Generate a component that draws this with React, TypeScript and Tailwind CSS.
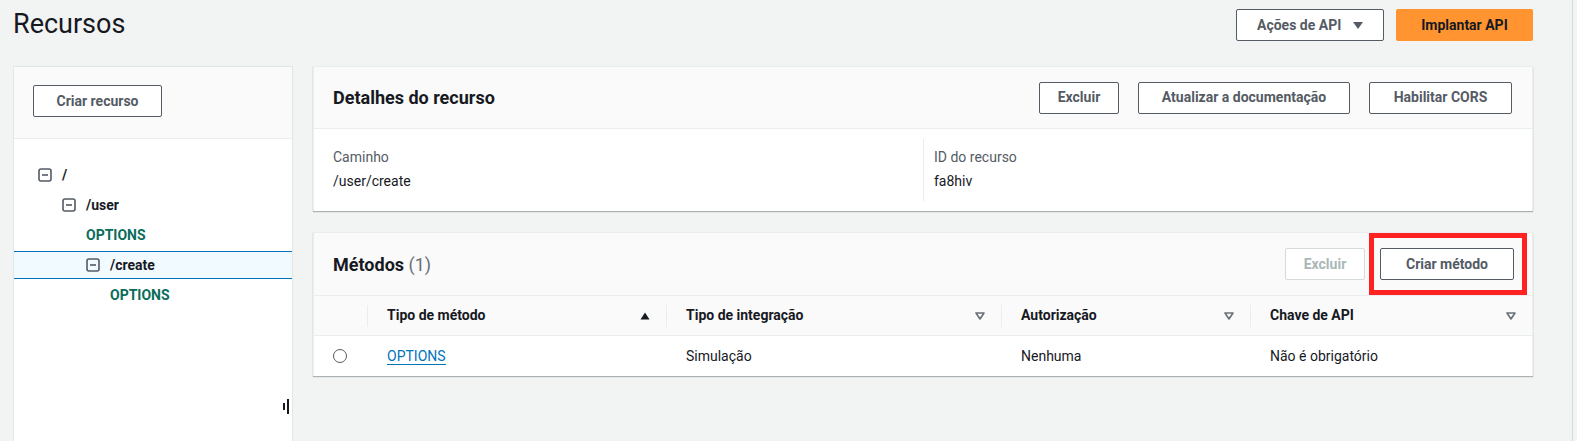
import React from "react";

function TreeToggle() {
  return (
    <svg width="14" height="14" viewBox="0 0 14 14" className="shrink-0">
      <rect x="1" y="1" width="12" height="12" rx="2" fill="none" stroke="#545b64" strokeWidth="1.6" />
      <line x1="4" y1="7" x2="10" y2="7" stroke="#545b64" strokeWidth="1.6" />
    </svg>
  );
}

function SortIcon({ active }: { active?: boolean }) {
  if (active) {
    return (
      <svg width="10" height="8" viewBox="0 0 10 8" className="shrink-0">
        <polygon points="5,0.5 9.5,7.5 0.5,7.5" fill="#16191f" />
      </svg>
    );
  }
  return (
    <svg width="10" height="8" viewBox="0 0 10 8" className="shrink-0">
      <polygon points="1,1 9,1 5,7" fill="none" stroke="#687078" strokeWidth="1.6" strokeLinejoin="round" />
    </svg>
  );
}

function Btn({ children, disabled, w }: { children: React.ReactNode; disabled?: boolean; w: string }) {
  return (
    <button
      className={
        (disabled
          ? "h-[32px] rounded-[2px] border border-[#d5dbdb] bg-white text-[14px] font-bold text-[#aab7b8] "
          : "h-[32px] rounded-[2px] border border-[#545b64] bg-white text-[14px] font-bold text-[#545b64] ") + w
      }
    >
      {children}
    </button>
  );
}

const tree = [
  { label: "/", level: 0, toggle: true },
  { label: "/user", level: 1, toggle: true },
  { label: "OPTIONS", level: 2, method: true },
  { label: "/create", level: 2, toggle: true, selected: true },
  { label: "OPTIONS", level: 3, method: true },
];

export default function App() {
  return (
    <div
      className="flex h-[441px] w-full overflow-hidden bg-[#f2f3f3] text-[#16191f]"
      style={{ fontFamily: "Roboto, 'Liberation Sans', sans-serif" }}
    >
      <div className="flex w-[1572px] shrink-0 flex-col pl-[13px] pr-[39px]">
        {/* Page header */}
        <div className="flex h-[66px] shrink-0 items-start justify-between">
          <h1 className="mt-[8px] text-[27px] font-normal leading-[32px] text-[#16191f]">Recursos</h1>
          <div className="mt-[9px] flex gap-[12px]">
            <button className="flex h-[32px] w-[148px] items-center gap-[12px] rounded-[2px] border border-[#545b64] bg-white pl-[20px] text-[14px] font-bold text-[#545b64]">
              Ações de API
              <svg width="10" height="7" viewBox="0 0 10 7">
                <polygon points="0,0 10,0 5,7" fill="#545b64" />
              </svg>
            </button>
            <button className="h-[32px] w-[137px] rounded-[2px] bg-[#ff9430] text-[14px] font-bold text-[#16191f]">
              Implantar API
            </button>
          </div>
        </div>

        <div className="flex min-h-0 flex-1 gap-[20px]">
          {/* Resource tree */}
          <div className="relative flex w-[280px] shrink-0 flex-col border border-b-0 border-[#e3e6e6] bg-white">
            <div className="border-b border-[#eaeded] bg-[#fafafa] px-[19px] pb-[21px] pt-[18px]">
              <button className="h-[32px] w-[129px] rounded-[2px] border border-[#545b64] bg-white text-[14px] font-bold text-[#545b64]">
                Criar recurso
              </button>
            </div>
            <div className="pt-[21px]">
              {tree.map((n, i) => (
                <div
                  key={i}
                  className={
                    n.selected
                      ? "my-[1px] flex h-[28px] items-center gap-[10px] border-y border-[#0073bb] bg-[#f1faff] text-[14px] font-bold"
                      : "flex h-[30px] items-center gap-[10px] text-[14px] font-bold"
                  }
                  style={{ paddingLeft: 24 + n.level * 24 }}
                >
                  {n.toggle && <TreeToggle />}
                  <span className={n.method ? "text-[#0a6c5a]" : "text-[#16191f]"}>{n.label}</span>
                </div>
              ))}
            </div>
            <div className="absolute left-[269px] top-[332px] flex items-center gap-[2px]">
              <div className="h-[7px] w-[2px] bg-[#16191f]" />
              <div className="h-[15px] w-[2px] bg-[#16191f]" />
            </div>
          </div>

          {/* Right column */}
          <div className="flex flex-1 flex-col">
            {/* Resource details */}
            <div className="border border-b-0 border-[#eaeded] bg-white shadow-[0_1px_1px_0_rgba(0,28,36,0.3)]">
              <div className="flex h-[62px] items-center justify-between border-b border-[#eaeded] bg-[#fafafa] pl-[19px] pr-[20px]">
                <h2 className="text-[18px] font-bold">Detalhes do recurso</h2>
                <div className="flex gap-[19px]">
                  <Btn w="w-[80px]">Excluir</Btn>
                  <Btn w="w-[212px]">Atualizar a documentação</Btn>
                  <Btn w="w-[143px]">Habilitar CORS</Btn>
                </div>
              </div>
              <div className="grid grid-cols-2 px-[19px] py-[10px] text-[14px]">
                <div className="h-[62px] pt-[7px]">
                  <div className="leading-[22px] text-[#545b64]">Caminho</div>
                  <div className="mt-[2px] leading-[22px]">/user/create</div>
                </div>
                <div className="h-[62px] border-l border-[#eaeded] pl-[10px] pt-[7px]">
                  <div className="leading-[22px] text-[#545b64]">ID do recurso</div>
                  <div className="mt-[2px] leading-[22px]">fa8hiv</div>
                </div>
              </div>
            </div>

            {/* Methods */}
            <div className="relative mt-[21px] border border-b-0 border-[#eaeded] bg-white shadow-[0_1px_1px_0_rgba(0,28,36,0.3)]">
              <div className="flex h-[63px] items-center justify-between border-b border-[#eaeded] bg-[#fafafa] pl-[19px] pr-[18px]">
                <h2 className="text-[18px] font-bold">
                  Métodos <span className="font-normal text-[#687078]">(1)</span>
                </h2>
                <div className="flex gap-[15px]">
                  <Btn disabled w="w-[80px]">Excluir</Btn>
                  <Btn w="w-[134px]">Criar método</Btn>
                </div>
              </div>
              <div className="grid h-[40px] grid-cols-[53px_299px_335px_249px_1fr] border-b border-[#eaeded] bg-[#fafafa] text-[14px] font-bold">
                <div />
                {[
                  { t: "Tipo de método", active: true },
                  { t: "Tipo de integração" },
                  { t: "Autorização" },
                  { t: "Chave de API" },
                ].map((c) => (
                  <div key={c.t} className="flex items-center">
                    <div className="h-[22px] w-px bg-[#eaeded]" />
                    <div className="flex flex-1 items-center justify-between pl-[19px] pr-[16px]">
                      <span>{c.t}</span>
                      <SortIcon active={c.active} />
                    </div>
                  </div>
                ))}
              </div>
              <div className="grid h-[40px] grid-cols-[53px_299px_335px_249px_1fr] items-center text-[14px]">
                <div className="pl-[19px]">
                  <div className="h-[14px] w-[14px] rounded-full border-[1.5px] border-[#545b64]" />
                </div>
                <div className="pl-[20px]">
                  <span className="border-b border-[#0073bb] leading-[20px] text-[#0073bb]">OPTIONS</span>
                </div>
                <div className="pl-[20px]">Simulação</div>
                <div className="pl-[20px]">Nenhuma</div>
                <div className="pl-[20px]">Não é obrigatório</div>
              </div>
              {/* red highlight annotation */}
              <div className="pointer-events-none absolute left-[1055px] top-0 h-[62px] w-[158px] border-[5px] border-[#ff2222]" />
            </div>
          </div>
        </div>
      </div>
      <div className="flex-1 border-l border-[#d5dbdb] bg-[#f2f3f3]" />
    </div>
  );
}
